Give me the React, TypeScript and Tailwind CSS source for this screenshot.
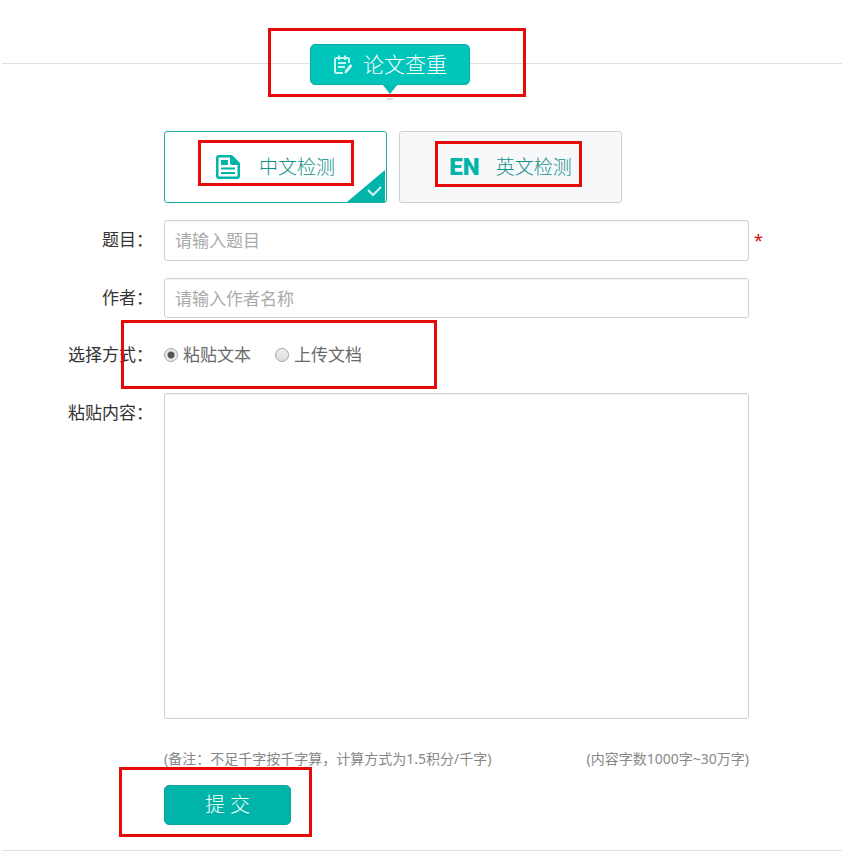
import { useState, type ReactNode } from "react";

const MARK = "pointer-events-none absolute z-10 border-3 border-[#e60b0b]";
const FIELD =
  "w-full rounded-[3px] border border-[#cfcfcf] bg-white px-[10px] text-[17px] text-[#333] shadow-[inset_0_1px_1px_rgba(0,0,0,0.04)] outline-none placeholder:text-[#aaa] focus:border-[#00b4aa]";
const LABEL = "w-[154px] shrink-0 -ml-[11px] mr-[11px] text-right text-[17px] leading-10 text-[#333]";

function NotepadIcon() {
  return (
    <svg width="20" height="20" viewBox="0 0 20 20" fill="none" stroke="#c4f6f2" strokeWidth="2" aria-hidden="true">
      <path d="M16 8V4.500Q16 3 14.500 3H3.500Q2 3 2 4.500V16.500Q2 18 3.500 18H10" />
      <path d="M6 0.500V5M12 0.500V5" />
      <path d="M5 8H13M5 12H12" strokeWidth="2" />
      <path d="M11.500 18.500L12 15.500L17.500 9L19.500 11L14 17.500Z" fill="#d9fbf8" stroke="none" />
    </svg>
  );
}

function DocumentIcon() {
  return (
    <svg width="24" height="24" viewBox="0 0 24 24" aria-hidden="true">
      <path
        d="M3 0H16L24 8V21Q24 24 21 24H3Q0 24 0 21V3Q0 0 3 0Z M3 2.500Q2.500 2.500 2.500 3V21Q2.500 21.500 3 21.500H21Q21.500 21.500 21.500 21V10H16Q14 10 14 8V2.500Z"
        fill="#00b4aa"
        fillRule="evenodd"
      />
      <path d="M5 5H12V10H5ZM5 12.500H19V14.500H5ZM5 17H19V19H5Z" fill="#00b4aa" />
    </svg>
  );
}

function Option(props: { label: string; icon: ReactNode; active: boolean; mark: string; onClick: () => void }) {
  return (
    <button
      type="button"
      aria-pressed={props.active}
      onClick={props.onClick}
      className={`relative flex h-[72px] max-w-[223px] flex-1 items-center justify-center rounded-[3px] border text-[19px] font-light text-[#0f9188] ${
        props.active ? "border-[#20aea4] bg-white" : "border-[#cdd0d2] bg-[#f7f8fa]"
      }`}
    >
      {props.icon}
      <span>{props.label}</span>
      {props.active && (
        <svg className="absolute right-0 bottom-0" width="39" height="32" viewBox="0 0 39 32" aria-hidden="true">
          <path d="M38 0V32H0Z" fill="#00b4aa" />
          <path d="M21 20L26 25L34 17" fill="none" stroke="#d0f5f2" strokeWidth="2" />
        </svg>
      )}
      <span className={`${MARK} ${props.mark}`} />
    </button>
  );
}

function RadioOption(props: { label: string; checked: boolean; onChange: () => void }) {
  return (
    <label className="flex items-center gap-[5px] text-[17px] text-[#6a6a6a]">
      <input
        type="radio"
        name="method"
        checked={props.checked}
        onChange={props.onChange}
        className="size-[14px] appearance-none rounded-full border border-[#a5a5a5] bg-linear-to-b from-[#f0f0f0] to-[#dcdcdc] checked:bg-[radial-gradient(circle,#555_0_3px,#e9e9e9_4px)]"
      />
      {props.label}
    </label>
  );
}

export default function App() {
  const [lang, setLang] = useState("zh");
  const [method, setMethod] = useState("paste");

  return (
    <main className="bg-white px-[2px] font-['Noto_Sans','Noto_Sans_CJK_SC',sans-serif]">
      <header className="relative flex justify-center pt-11 pr-[64px]">
        <div className="absolute inset-x-0 top-[63px] border-t border-[#e0e0e0]" />
        <h1 className="relative flex h-[41px] w-[160px] items-center justify-center gap-[10px] rounded-[5px] border border-[#10aaa0] bg-[#00c5bb] text-[21px] leading-7 font-light text-white">
          <NotepadIcon />
          <span className="pb-[2px]">论文查重</span>
          <svg className="absolute top-[39px] left-[71px]" width="16" height="17" viewBox="0 0 16 17" aria-hidden="true">
            <path d="M0 0H16L8 10Z" fill="#00bdb3" />
            <ellipse cx="8" cy="15" rx="4" ry="1" fill="#000" opacity="0.15" />
          </svg>
          <span className={`${MARK} -top-[17px] -right-[57px] -bottom-[13px] -left-[43px]`} />
        </h1>
      </header>

      <form className="mt-[46px] flex flex-col gap-[17px] pr-[93px] pl-[8px]" onSubmit={(e) => e.preventDefault()}>
        <div className="flex gap-3 pl-[154px]">
          <Option
            label="中文检测"
            active={lang === "zh"}
            onClick={() => setLang("zh")}
            mark="top-[8px] right-[32px] bottom-[16px] left-[33px]"
            icon={<span className="mr-[19px]"><DocumentIcon /></span>}
          />
          <Option
            label="英文检测"
            active={lang === "en"}
            onClick={() => setLang("en")}
            mark="top-[9px] right-[39px] bottom-[15px] left-[35px]"
            icon={<span className="mr-[16px] font-['Roboto'] text-[24px] font-black text-[#00b4aa]">EN</span>}
          />
        </div>

        <div className="flex">
          <label htmlFor="title" className={LABEL}>题目：</label>
          <div className="relative flex-1">
            <input id="title" required placeholder="请输入题目" className={`${FIELD} h-[41px]`} />
            <span className="absolute top-2 -right-[14px] text-[17px] leading-6 text-[#d01010]">*</span>
          </div>
        </div>

        <div className="flex">
          <label htmlFor="author" className={LABEL}>作者：</label>
          <input id="author" placeholder="请输入作者名称" className={`${FIELD} h-10 flex-1`} />
        </div>

        <fieldset className="relative flex" aria-labelledby="method-label">
          <span id="method-label" className={LABEL}>选择方式：</span>
          <div className="flex gap-6">
            <RadioOption label="粘贴文本" checked={method === "paste"} onChange={() => setMethod("paste")} />
            <RadioOption label="上传文档" checked={method === "upload"} onChange={() => setMethod("upload")} />
          </div>
          <span className={`${MARK} -top-[15px] -bottom-[14px] left-[111px] w-[316px]`} />
        </fieldset>

        <div className="flex pt-px">
          <label htmlFor="content" className={LABEL}>粘贴内容：</label>
          <textarea id="content" className={`${FIELD} h-[326px] flex-1 resize-none py-2`} />
        </div>

        <div className="mt-[13px] flex justify-between pl-[154px] text-[14px] leading-5 text-[#888]">
          <span>(备注：不足千字按千字算，计算方式为1.5积分/千字)</span>
          <span>(内容字数1000字~30万字)</span>
        </div>

        <div className="-mt-px flex pl-[154px]">
          <button
            type="submit"
            className="relative h-10 w-[127px] rounded-[5px] border border-[#10a39a] bg-[#00b4aa] text-[20px] font-light text-white"
          >
            提 交
            <span className={`${MARK} -top-[19px] -right-[22px] -bottom-[13px] -left-[46px]`} />
          </button>
        </div>
      </form>
      <div className="mt-[25px] border-t border-[#e0e0e0]" />
    </main>
  );
}
